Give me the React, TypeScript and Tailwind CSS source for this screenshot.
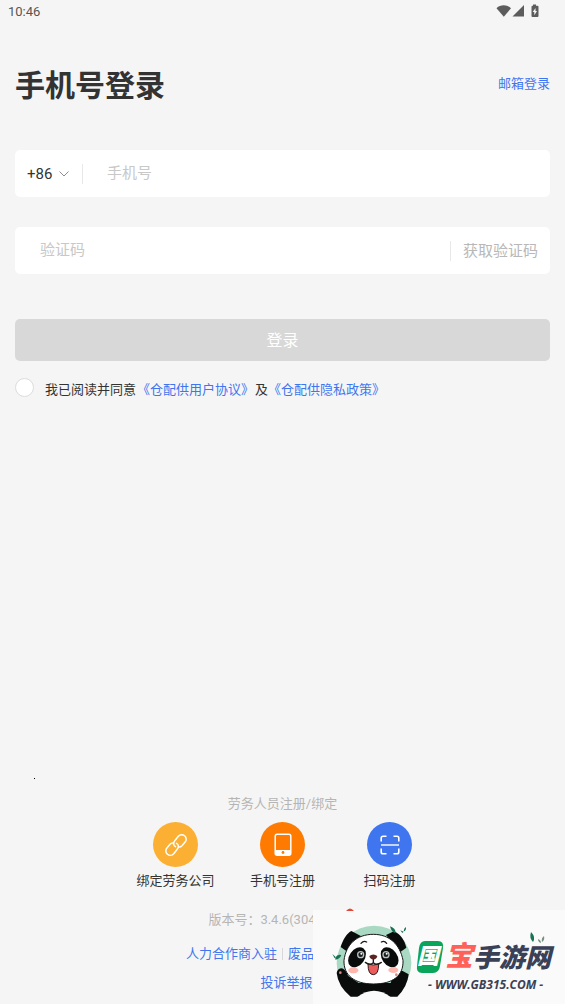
import React, { useState } from "react";

function StatusBar() {
  return (
    <header className="flex h-6 items-center justify-between pl-2 pr-6 text-[13px] leading-6 text-[#555]">
      <span>10:46</span>
      <svg width="45" height="14" viewBox="0 0 45 14" fill="#5c5c5c" aria-hidden="true" className="mb-[2px]">
        <path d="M0.5 4.2C4.5 0.4 11 0.4 15 4.2L7.8 12.8Z" />
        <path d="M28 1v11.5H16.500Z" />
        <path d="M37 0.500h3v1.200h1.500q1 0 1 1V12q0 1-1 1h-5q-1 0-1-1V2.700q0-1 1-1H37Z" />
        <path d="M39.500 4 36.700 8h1.600v3.200l2.700-4.200H39.500Z" fill="#f5f5f5" />
      </svg>
    </header>
  );
}

function LinkIcon() {
  return (
    <svg width="24" height="24" viewBox="0 0 24 24" fill="none" stroke="white" strokeWidth="1.500" strokeLinecap="round" aria-hidden="true">
      <path d="M11.500 13.600C9.300 12.600 9 9.800 10.600 7.900L14.300 3.300C15.900 1.400 18.700 1.200 20.600 2.800C22.500 4.400 22.700 7.200 21.100 9.100L18 12.700Q16.800 14 15.300 14" />
      <path d="M12.500 10.400C14.700 11.400 15 14.200 13.400 16.100L9.700 20.700C8.100 22.600 5.300 22.800 3.400 21.200C1.500 19.600 1.300 16.800 2.900 14.900L6 11.300Q7.200 10 8.700 10" />
    </svg>
  );
}

function PhoneIcon() {
  return (
    <svg width="18" height="24" viewBox="0 0 18 24" fill="none" aria-hidden="true">
      <rect x="1.200" y="1.200" width="15.600" height="21" rx="2" stroke="white" strokeWidth="1.500" />
      <path d="M1.500 17h15v4q0 1.200-1.200 1.200H2.700Q1.500 22.200 1.500 21Z" fill="white" />
      <circle cx="9" cy="19.500" r="1.400" fill="#ff7a00" />
    </svg>
  );
}

function ScanIcon() {
  return (
    <svg width="20" height="20" viewBox="0 0 20 20" fill="none" stroke="white" strokeWidth="1.600" aria-hidden="true">
      <path d="M1.200 6.500V3q0-1.800 1.800-1.800h3.500M13.500 1.200H17q1.800 0 1.800 1.800v3.500M1.200 13.500V17q0 1.800 1.800 1.800h3.500M13.500 18.800H17q1.800 0 1.800-1.800v-3.500" />
      <path d="M1 10h18" strokeWidth="1.400" />
    </svg>
  );
}

function Action({ label, color, children }: { label: string; color: string; children: React.ReactNode }) {
  return (
    <button type="button" className="flex w-[107px] flex-col items-center text-[13px] leading-5 text-[#333]">
      <span className={`mb-1 flex size-[45px] items-center justify-center rounded-full ${color}`}>{children}</span>
      {label}
    </button>
  );
}

function Panda() {
  return (
    <svg width="80" height="73" viewBox="20 60 240 219" aria-hidden="true">
      <circle cx="146" cy="174" r="112" fill="#a9d8c3" />
      <path d="M46 126C54 102 64 86 78 78L108 94L66 140ZM182 90L206 79C226 88 238 106 243 128L224 142Z" fill="#0a0c0c" />
      <path d="M34 204Q36 190 50 190Q62 194 68 212L100 234H196L204 208Q214 190 232 198L250 208Q246 246 216 275H76Q38 244 34 204Z" fill="#0a0c0c" />
      <path d="M96 276Q146 238 196 276V279H96Z" fill="#fafafa" />
      <path d="M144 88C192 88 224 118 233 166C235 213 202 237 144 237C88 237 54 211 56 166C62 118 94 88 144 88Z" fill="white" stroke="#151717" strokeWidth="3" />
      <ellipse cx="95" cy="157" rx="23" ry="33" transform="rotate(35 95 157)" fill="#0a0c0c" />
      <ellipse cx="193" cy="157" rx="23" ry="33" transform="rotate(-35 193 157)" fill="#0a0c0c" />
      <circle cx="106" cy="149" r="9" fill="#1a1d20" stroke="#b9c1c2" strokeWidth="4" />
      <circle cx="182" cy="149" r="9" fill="#1a1d20" stroke="#b9c1c2" strokeWidth="4" />
      <circle cx="108" cy="146" r="3" fill="white" />
      <circle cx="184" cy="146" r="3" fill="white" />
      <ellipse cx="84" cy="196" rx="15" ry="9" fill="#ffb7ad" />
      <ellipse cx="204" cy="195" rx="15" ry="9" fill="#ffb7ad" />
      <path d="M132 153Q144 144 156 153Q154 163 144 164Q134 163 132 153Z" fill="#5b2421" />
      <path d="M128 177Q144 183 160 177Q160 209 144 209Q128 209 128 177Z" fill="#eb5d5d" stroke="#32191a" strokeWidth="3" />
      <path d="M144 164V174M120 172Q134 182 144 173Q154 182 168 172M107 115Q115 106 124 111M168 111Q177 106 184 115" fill="none" stroke="#1b1818" strokeWidth="4" strokeLinecap="round" />
      <circle cx="45" cy="203" r="4" fill="#d68b83" />
      <circle cx="213" cy="209" r="4" fill="#d68b83" />
      <path d="M194 64Q212 70 211 85Q198 82 194 64ZM30 158Q36 146 48 150Q43 163 30 164ZM21 147 31 156 28 160ZM225 76 235 80 231 84ZM242 66Q243 78 235 79Q236 69 242 66Z" fill="#187152" />
    </svg>
  );
}

function Watermark() {
  return (
    <aside className="absolute bottom-0 right-0 h-[94px] w-[252px] bg-[#fafafa]">
      <svg width="8" height="3" viewBox="0 0 8 3" aria-hidden="true" className="absolute -top-[2px] left-[33px]">
        <path d="M0 3Q4-2 8 3Z" fill="#e8463b" />
      </svg>
      <div className="flex items-start pl-[19px] pt-[15px]">
        <Panda />
        <div className="relative ml-1 flex flex-col pt-3">
          <svg width="18" height="12" viewBox="0 0 18 12" aria-hidden="true" className="absolute right-[4px] top-[6px]">
            <path d="M2 1Q7 6 4 11Q0 7 2 1Z" fill="#187454" />
            <path d="M15 5Q16 9 13 11Q12 7 15 5ZM9 8Q12 9 12 12Q9 11 9 8Z" fill="#778f80" />
          </svg>
          <div className="flex items-center text-[26px] font-black italic leading-9 text-[#3a4055]">
            <span className="relative mr-px flex h-9 w-7 items-center justify-center pr-1 text-[22px] text-white">
              <svg width="28" height="34" viewBox="0 0 28 34" aria-hidden="true" className="absolute left-0 top-px">
                <path d="M9 1H22Q28 1 27 8L24 26Q23 33 17 33H6Q0 33 1 26L3 8Q4 1 9 1Z" fill="#0ba45b" />
              </svg>
              <span className="relative">国</span>
            </span>
            <span className="text-[28px] text-[#ff6159]">宝</span>
            <span className="pt-[3px]">手游网</span>
          </div>
          <span className="mt-px pl-3 font-['Open_Sans'] text-[12px] font-bold italic leading-4 text-[#3a4055]">- WWW.GB315.COM -</span>
        </div>
      </div>
    </aside>
  );
}

export default function App() {
  const [agreed, setAgreed] = useState(false);
  return (
    <div className="relative flex min-h-screen flex-col overflow-hidden bg-[#f5f5f5] font-[Roboto,'Noto_Sans_CJK_SC',sans-serif] text-[#333]">
      <StatusBar />
      <main className="px-[15px] pt-10">
        <div className="flex items-center justify-between">
          <h1 className="py-[2px] text-[30px] font-bold leading-10">手机号登录</h1>
          <a href="#email" className="pb-[5px] text-[13px] leading-5 text-[#3f76f0]">邮箱登录</a>
        </div>

        <form onSubmit={(e) => e.preventDefault()} className="pt-[42px]">
          <div className="mb-[30px] flex h-[47px] items-center rounded-[5px] bg-white text-[15px]">
            <div className="relative flex h-5 items-center border-r border-[#e8e8e8]">
              <select aria-label="国家区号" className="w-[67px] appearance-none bg-transparent pl-3 leading-5 outline-none">
                <option>+86</option>
              </select>
              <svg width="10" height="6" viewBox="0 0 10 6" fill="none" stroke="#8c8c8c" aria-hidden="true" className="pointer-events-none absolute right-[13px]">
                <path d="m.5.5 4.500 4.500 4.500-4.500" />
              </svg>
            </div>
            <input aria-label="手机号" type="tel" placeholder="手机号" className="ml-6 min-w-0 flex-1 bg-transparent outline-none placeholder:text-[#c8c8c8]" />
          </div>
          <div className="flex h-[47px] items-center rounded-[5px] bg-white text-[15px]">
            <input aria-label="验证码" type="text" placeholder="验证码" className="ml-[25px] min-w-0 flex-1 bg-transparent outline-none placeholder:text-[#c8c8c8]" />
            <button type="button" className="h-5 border-l border-[#e8e8e8] px-3 leading-5 text-[#b8b8b8]">获取验证码</button>
          </div>
          <button type="submit" className="mt-[45px] h-[42px] w-full rounded-[5px] bg-[#d8d8d8] pt-[2px] text-[16px] text-white">登录</button>
          <div className="flex items-start pt-[17px] text-[13px] leading-5">
            <input
              id="agree"
              type="checkbox"
              checked={agreed}
              onChange={(e) => setAgreed(e.target.checked)}
              className="mr-[11px] size-[19px] shrink-0 appearance-none rounded-full border border-[#dcdcdc] bg-white checked:border-[#3f76f0] checked:bg-[#3f76f0]"
            />
            <p className="pt-[2px]">
              <label htmlFor="agree">我已阅读并同意</label>
              <a href="#terms" className="mx-px text-[#3f76f0]">《仓配供用户协议》</a>
              及
              <a href="#privacy" className="text-[#3f76f0]">《仓配供隐私政策》</a>
            </p>
          </div>
        </form>
      </main>

      <footer className="mt-auto flex flex-col items-center pb-[11px] text-[13px] leading-5">
        <span className="mb-[15px] ml-[34px] size-px self-start bg-black" />
        <p className="mb-2 text-[#b5b5b5]">劳务人员注册/绑定</p>
        <div className="flex justify-center">
          <Action label="绑定劳务公司" color="bg-[#fbb034]"><LinkIcon /></Action>
          <Action label="手机号注册" color="bg-[#ff7a00]"><PhoneIcon /></Action>
          <Action label="扫码注册" color="bg-[#3f76f0]"><ScanIcon /></Action>
        </div>
        <p className="mt-[19px] text-[#b5b5b5]">版本号：3.4.6(30406000)</p>
        <nav className="flex flex-col items-center text-[#3f76f0]">
          <div className="mt-[14px] flex items-center">
            <a href="#partner">人力合作商入驻</a>
            <span className="mx-[5px] h-3 w-px bg-[#d8d8d8]" />
            <a href="#recycle">废品回收商入驻</a>
          </div>
          <a href="#report" className="mt-[9px] pl-2">投诉举报</a>
        </nav>
      </footer>
      <Watermark />
    </div>
  );
}
